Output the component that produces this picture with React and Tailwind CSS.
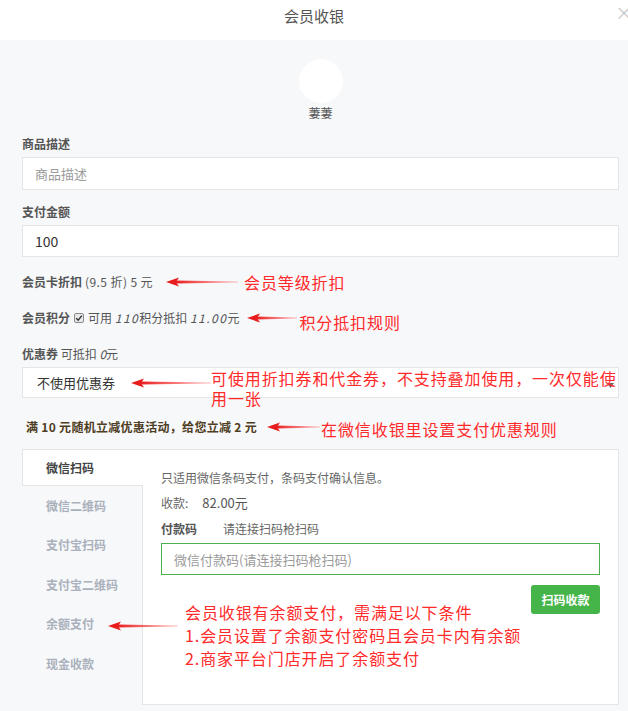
import React from 'react';

const tabs = ['微信扫码', '微信二维码', '支付宝扫码', '支付宝二维码', '余额支付', '现金收款'];

const Arrow = ({ id, width, className = '' }) => (
  <svg width={width} height="10" viewBox={`0 0 ${width} 10`} className={className}>
    <defs>
      <linearGradient id={id} x1="0" y1="0" x2="1" y2="0">
        <stop offset="0" stopColor="#e81c1c" />
        <stop offset="1" stopColor="#ff4a4a" stopOpacity="0.35" />
      </linearGradient>
    </defs>
    <polygon points="0,5 13,0.5 10,5 13,9.5" fill="#e81c1c" />
    <polygon points={`9,3.6 ${width},4.6 ${width},5.4 9,6.4`} fill={`url(#${id})`} />
  </svg>
);

const Note = ({ children, className = '' }) => (
  <span className={`text-[16px] leading-[20px] tracking-[0.9px] text-[#ff2a2a] ${className}`}>{children}</span>
);

const Check = () => (
  <span className="mx-[4px] inline-flex h-[10px] w-[10px] items-center justify-center rounded-[2px] border border-[#8a8a8a] bg-[#e9e9e9]">
    <svg width="8" height="8" viewBox="0 0 8 8">
      <path d="M1.2 4.2 L3.2 6.2 L6.8 1.6" fill="none" stroke="#333" strokeWidth="1.4" />
    </svg>
  </span>
);

export default function App() {
  return (
    <div className="min-h-[711px] overflow-hidden bg-[#f7f8fa] font-['Noto_Sans_CJK_SC',sans-serif] text-[12px] text-[#555]">
      {/* header */}
      <header className="relative flex h-[40px] justify-center bg-white pt-[6px]">
        <span className="text-[15px] leading-[20px] text-[#555]">会员收银</span>
        <span className="absolute right-[-5px] top-[2px] text-[18px] leading-[20px] text-[#c8c8c8]">×</span>
      </header>

      <div className="pl-[22px] pr-[9px]">
        {/* member */}
        <div className="flex flex-col items-center pt-[19px]">
          <div className="h-[44px] w-[44px] rounded-full bg-white" />
          <div className="mt-[2px] leading-[16px] text-[#555]">萋萋</div>
        </div>

        <div className="mt-[13px] h-[20px] font-bold leading-[20px]">商品描述</div>
        <input
          readOnly
          placeholder="商品描述"
          className="mt-[3px] block h-[33px] w-full border border-[#e3e5e8] bg-white px-[12px] text-[13px] text-[#333] outline-none placeholder:text-[#9a9a9a]"
        />

        <div className="mt-[12px] h-[20px] font-bold leading-[20px]">支付金额</div>
        <input
          readOnly
          value="100"
          className="mt-[3px] block h-[32px] w-full border border-[#e3e5e8] bg-white px-[12px] text-[14px] text-[#333] outline-none"
        />

        {/* discount rows */}
        <div className="mt-[15px] flex h-[20px] items-center whitespace-nowrap">
          <span className="font-bold">会员卡折扣</span>
          <span className="tracking-[0.4px]">&nbsp;(9.5 折) 5 元</span>
          <Arrow id="a1" width={72} className="ml-[13px]" />
          <Note className="ml-[6px]">会员等级折扣</Note>
        </div>

        <div className="mt-[16px] flex h-[20px] items-center whitespace-nowrap">
          <span className="font-bold">会员积分</span>
          <Check />
          <span>可用&nbsp;</span>
          <span className="italic tracking-[1.5px]">110</span>
          <span>积分抵扣&nbsp;</span>
          <span className="italic tracking-[1.5px]">11.00</span>
          <span>元</span>
          <Arrow id="a2" width={50} className="ml-[8px]" />
          <Note className="ml-[2px] mt-[8px]">积分抵扣规则</Note>
        </div>

        <div className="mt-[16px] flex h-[20px] items-center whitespace-nowrap">
          <span className="font-bold">优惠券</span>
          <span>&nbsp;可抵扣&nbsp;</span>
          <span className="italic">0</span>
          <span>元</span>
        </div>

        <div className="relative mt-[3px] flex h-[31px] items-center border border-[#e3e5e8] bg-white pl-[14px] text-[13px] text-[#333]">
          不使用优惠券
          <svg width="7" height="5" viewBox="0 0 7 5" className="absolute right-[4px] top-[15px]">
            <path d="M0 0 L7 0 L3.5 5 Z" fill="#666" />
          </svg>
          <Arrow id="a3" width={80} className="absolute left-[108px] top-[10px]" />
          <Note className="absolute left-[188px] top-0 whitespace-nowrap">
            可使用折扣券和代金券，不支持叠加使用，一次仅能使
            <br />
            用一张
          </Note>
        </div>

        <div className="mt-[19px] flex h-[20px] items-center whitespace-nowrap pl-[4px]">
          <span className="font-bold tracking-[0.3px] text-[#4e3d22]">满 10 元随机立减优惠活动，给您立减 2 元</span>
          <Arrow id="a4" width={53} className="ml-[10px]" />
          <Note className="ml-[1px] mt-[4px]">在微信收银里设置支付优惠规则</Note>
        </div>

        {/* payment tabs */}
        <div className="relative mt-[12px] flex">
          <div className="w-[120px] shrink-0">
            {tabs.map((t, i) =>
              i === 0 ? (
                <div
                  key={t}
                  className="relative z-10 flex h-[37px] w-[121px] items-center border-y border-l border-[#e3e5e8] bg-white pl-[23px] font-bold text-[#444]"
                >
                  {t}
                </div>
              ) : (
                <div key={t} className="flex h-[39.5px] items-center pl-[24px] font-bold text-[#aab1bc]">
                  {t}
                </div>
              )
            )}
          </div>

          <div className="flex h-[256px] flex-1 flex-col border border-[#e3e5e8] bg-white pl-[18px] pr-[18px] pt-[18px]">
            <div className="leading-[20px] text-[#666]">只适用微信条码支付，条码支付确认信息。</div>
            <div className="mt-[5px] flex leading-[20px] text-[#666]">
              <span>收款:</span>
              <span className="ml-[14px] text-[13px] text-[#555]">82.00元</span>
            </div>
            <div className="mt-[6px] flex leading-[20px]">
              <span className="font-bold text-[#555]">付款码</span>
              <span className="ml-[26px] text-[#666]">请连接扫码枪扫码</span>
            </div>
            <input
              readOnly
              placeholder="微信付款码(请连接扫码枪扫码)"
              className="mt-[4px] block h-[32px] w-full border border-[#4caf50] bg-white px-[12px] text-[13px] outline-none placeholder:text-[#9a9a9a]"
            />
            <div className="mt-[10px] flex justify-end">
              <button className="h-[29px] w-[69px] rounded-[3px] bg-[#45b449] text-[12px] font-bold text-white">
                扫码收款
              </button>
            </div>
          </div>

          <Arrow id="a5" width={70} className="absolute left-[86px] top-[172px]" />
          <div className="absolute left-[163px] top-[152px] flex flex-col">
            <Note className="leading-[23px]">会员收银有余额支付，需满足以下条件</Note>
            <Note className="leading-[23px]">1.会员设置了余额支付密码且会员卡内有余额</Note>
            <Note className="leading-[23px]">2.商家平台门店开启了余额支付</Note>
          </div>
        </div>
      </div>
    </div>
  );
}
